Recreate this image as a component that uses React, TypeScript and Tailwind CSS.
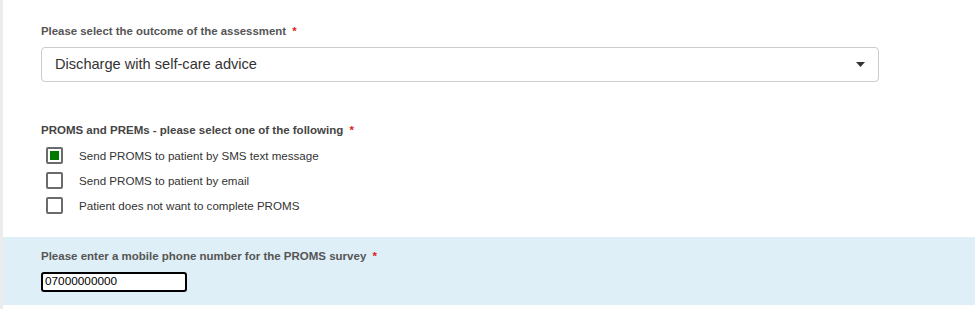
import React from "react";

function Box({ checked }: { checked?: boolean }) {
  return (
    <span className="w-[17px] h-[17px] border-2 border-[#6b6b6b] rounded-[2px] bg-white flex items-center justify-center shrink-0">
      {checked && <span className="w-[9px] h-[9px] bg-[#007a00]" />}
    </span>
  );
}

export default function App() {
  const font = { fontFamily: '"Liberation Sans", Arial, sans-serif' };
  return (
    <div className="w-[975px] h-[309px] bg-white flex" style={font}>
      <div className="w-[3px] bg-[#ececec] shrink-0" />
      <div className="flex-1 flex flex-col">
        <div className="pl-[38px] pt-[25px]">
          <div className="text-[11.4px] font-bold text-[#555] leading-[13px]">
            Please select the outcome of the assessment <span className="ml-[3px] text-[#e02020]">*</span>
          </div>
          <div className="mt-[9px] w-[838px] h-[35px] border border-[#cccccc] rounded-[4px] flex items-center justify-between pl-[13px] pr-[13px]">
            <span className="text-[14.6px] text-[#333]">Discharge with self-care advice</span>
            <svg width="9" height="5" viewBox="0 0 9 5"><path d="M0 0h9L4.5 5z" fill="#333" /></svg>
          </div>
        </div>
        <div className="pl-[38px] pt-[42px]">
          <div className="text-[11.5px] font-bold text-[#444] leading-[13px]">
            PROMS and PREMs - please select one of the following <span className="ml-[3px] text-[#e02020]">*</span>
          </div>
          <div className="mt-[10px] flex flex-col gap-[8px] pl-[5px]">
            {[
              ["Send PROMS to patient by SMS text message", true],
              ["Send PROMS to patient by email", false],
              ["Patient does not want to complete PROMS", false],
            ].map(([t, c]) => (
              <div key={t as string} className="flex items-center gap-[16px] h-[17px]">
                <Box checked={c as boolean} />
                <span className="text-[11.6px] text-[#333]">{t as string}</span>
              </div>
            ))}
          </div>
        </div>
        <div className="mt-[23px] h-[68px] bg-[#dfeff7] pl-[38px] pt-[13px]">
          <div className="text-[11.5px] font-bold text-[#555] leading-[13px]">
            Please enter a mobile phone number for the PROMS survey <span className="ml-[3px] text-[#e02020]">*</span>
          </div>
          <div className="mt-[9px] w-[146px] h-[20px] border-2 border-black rounded-[3px] bg-white flex items-center pl-[2px] text-[11.8px] text-black">
            07000000000
          </div>
        </div>
      </div>
    </div>
  );
}
